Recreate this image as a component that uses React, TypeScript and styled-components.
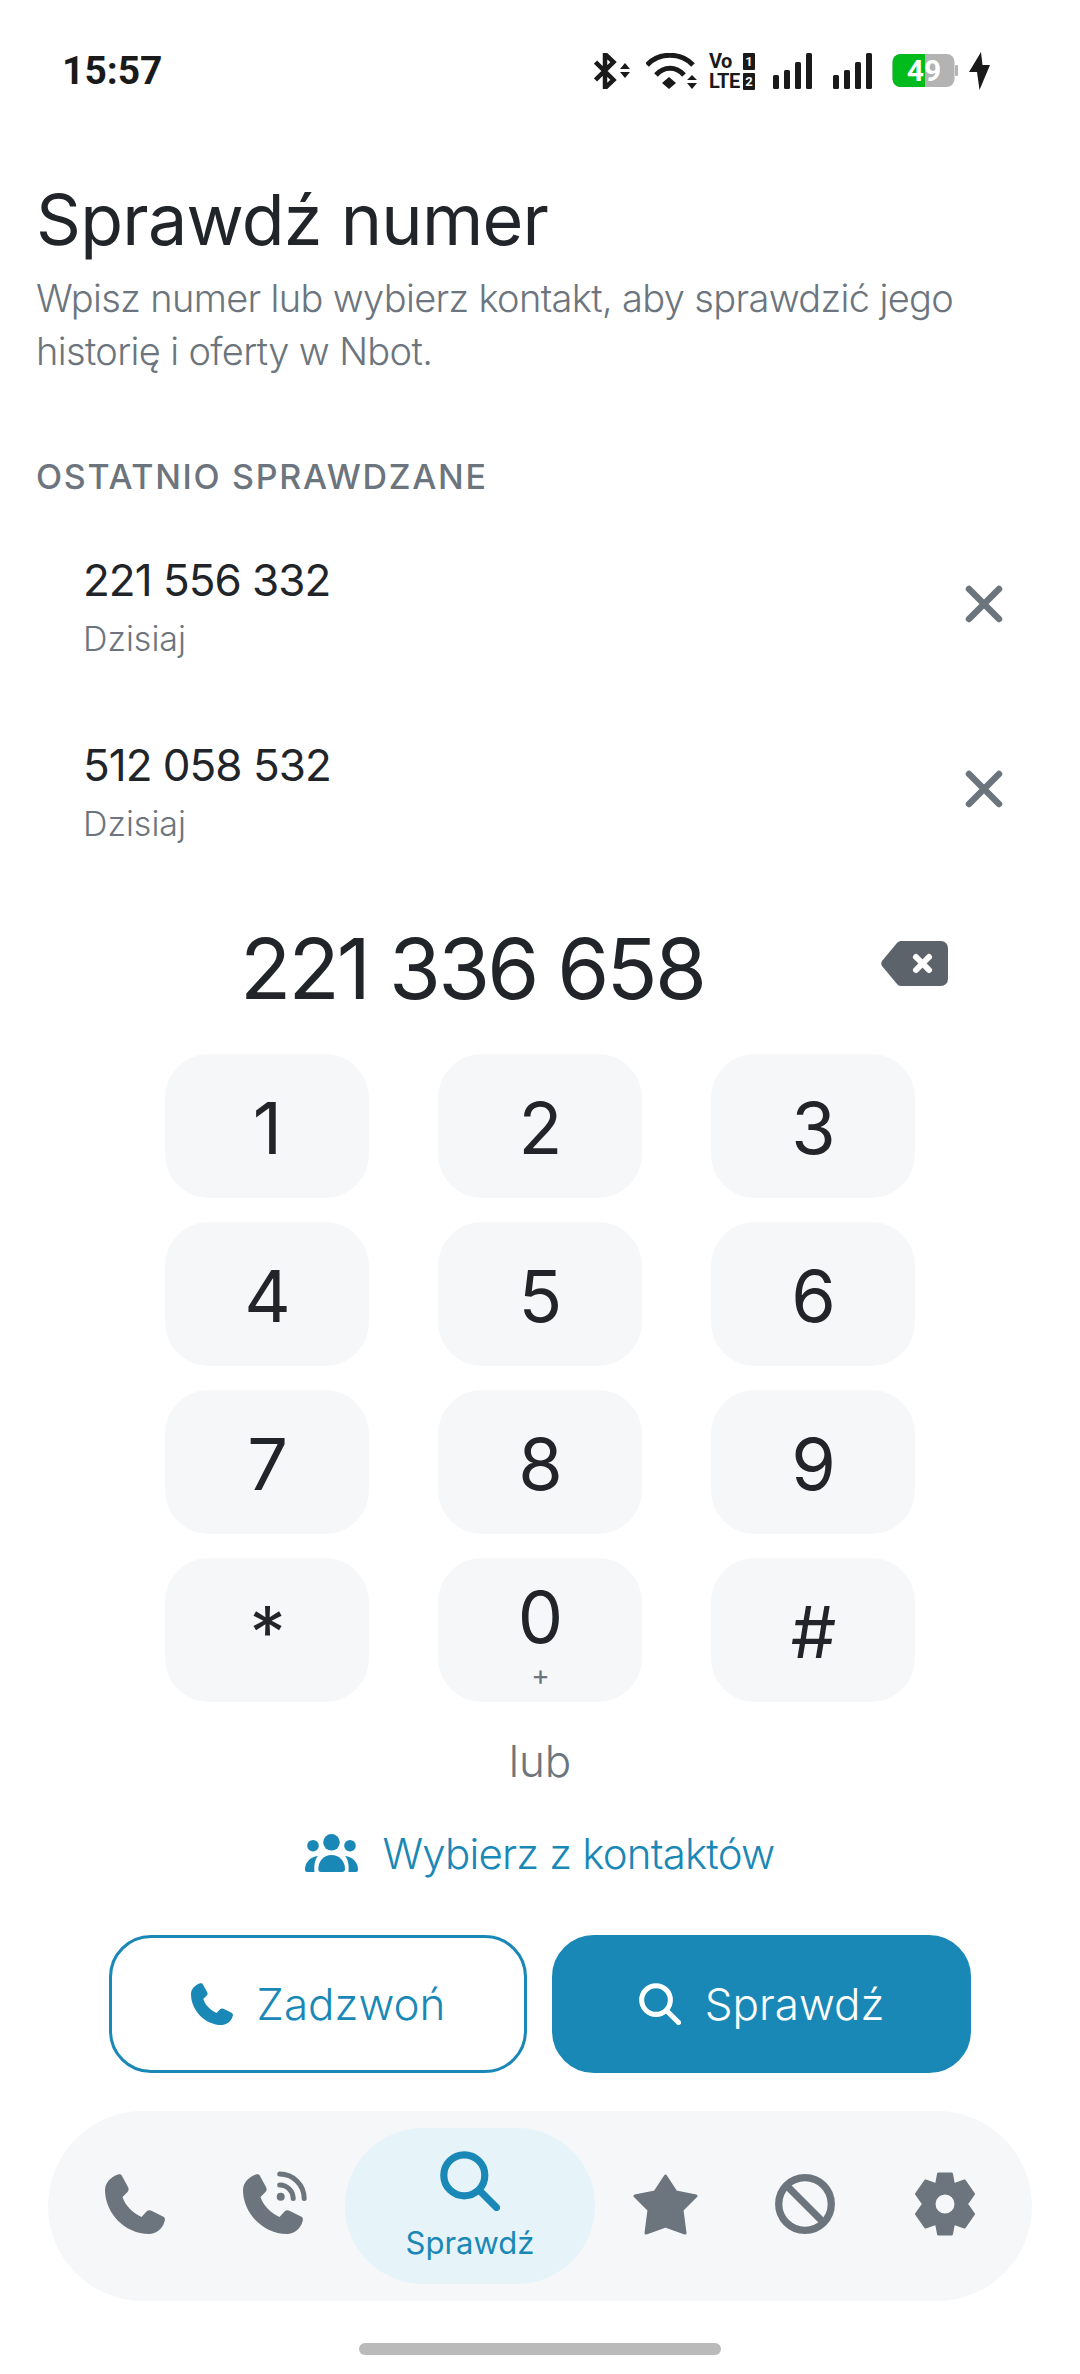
import React from "react";
import styled, { createGlobalStyle } from "styled-components";

const Global = createGlobalStyle`
  html, body { margin: 0; padding: 0; background: #fff; }
  * { box-sizing: border-box; }
`;

const Page = styled.div`
  width: 1080px;
  height: 2374px;
  overflow: hidden;
  background: #fff;
  font-family: Inter, "Liberation Sans", sans-serif;
  color: #212529;
  display: flex;
  flex-direction: column;
`;

const StatusBar = styled.div`
  height: 140px;
  padding: 2px 90px 0 62px;
  display: flex;
  align-items: center;
  justify-content: space-between;
`;
const Clock = styled.span`
  font: 700 39px Roboto, sans-serif;
  color: #1a1a1a;
`;
const StatusIcons = styled.div`
  display: flex;
  align-items: center;
`;
const Gap = styled.span<{ $w: number }>`
  width: ${(p) => p.$w}px;
`;
const VoGrid = styled.div`
  display: grid;
  grid-template-columns: 34px 12px;
  grid-auto-rows: 17px;
  row-gap: 3px;
  width: 46px;
  font: 700 20px/17px Roboto, sans-serif;
  color: #1a1a1a;
`;
const VoText = styled.span`
  white-space: nowrap;
  letter-spacing: -0.5px;
`;
const SimBadge = styled.span`
  background: #1a1a1a;
  color: #fff;
  font-size: 13px;
  line-height: 17px;
  text-align: center;
  border-radius: 1px;
`;

const Header = styled.header`
  padding: 34px 36px 0;
`;
const Title = styled.h1`
  margin: 0;
  font-size: 70px;
  line-height: 92px;
  font-weight: 400;
  letter-spacing: -0.75px;
`;
const Subtitle = styled.p`
  margin: 6px 0 0;
  font-size: 38px;
  line-height: 53px;
  font-weight: 300;
  color: #6c757d;
  letter-spacing: -0.65px;
`;
const SectionLabel = styled.div`
  padding: 77px 36px 0;
  font-size: 34px;
  line-height: 44px;
  font-weight: 500;
  letter-spacing: 1.7px;
  color: #6c757d;
`;

const Recent = styled.div`
  display: flex;
  flex-direction: column;
  padding-top: 30px;
  margin-bottom: 14px;
`;
const RecentRow = styled.div`
  height: 185px;
  padding: 20px 75px 0 83px;
  display: flex;
  justify-content: space-between;
  align-items: flex-start;
`;
const RecentText = styled.div`
  display: flex;
  flex-direction: column;
`;
const RecentNumber = styled.div`
  font-size: 44px;
  line-height: 63px;
  font-weight: 400;
  letter-spacing: -1px;
`;
const RecentDate = styled.div`
  margin-top: 2px;
  font-size: 34px;
  line-height: 50px;
  font-weight: 300;
  color: #6c757d;
`;
const RemoveSvg = styled.svg`
  margin-top: 34px;
  width: 42px;
  height: 42px;
  stroke: #6c757d;
  stroke-width: 6.5;
  stroke-linecap: round;
`;

const Display = styled.div`
  height: 112px;
  padding-left: 240px;
  display: flex;
  align-items: center;
  gap: 177px;
`;
const DialNumber = styled.div`
  font-size: 84px;
  line-height: 100px;
  font-weight: 400;
  letter-spacing: -2.8px;
  white-space: nowrap;
`;
const BackspaceSvg = styled.svg`
  width: 67px;
  height: 45px;
  margin-top: -11px;
`;

const Keypad = styled.div`
  margin: 29px auto 0;
  width: 750px;
  display: grid;
  grid-template-columns: repeat(3, 204px);
  grid-auto-rows: 144px;
  column-gap: 69px;
  row-gap: 24px;
`;
const Key = styled.div`
  background: #f6f7f9;
  border-radius: 44px;
  padding-top: 4px;
  display: flex;
  flex-direction: column;
  align-items: center;
  justify-content: center;
  font-size: 72px;
  line-height: 80px;
  letter-spacing: -1px;
`;
const KeySub = styled.span`
  margin-top: 6px;
  font-size: 28px;
  line-height: 24px;
  color: #6c757d;
`;

const Or = styled.div`
  margin-top: 31px;
  text-align: center;
  font-size: 44px;
  line-height: 56px;
  font-weight: 300;
  color: #6c757d;
`;
const ContactsLink = styled.div`
  margin-top: 36px;
  display: flex;
  align-items: center;
  justify-content: center;
  gap: 24px;
  height: 56px;
  font-size: 42px;
  font-weight: 300;
  letter-spacing: -0.8px;
  color: #1a88b6;
`;
const Actions = styled.div`
  margin: 54px auto 0;
  width: 862px;
  display: grid;
  grid-template-columns: 418px 419px;
  column-gap: 25px;
`;
const ActionButton = styled.div<{ $filled?: boolean }>`
  height: 138px;
  border-radius: 42px;
  display: flex;
  align-items: center;
  justify-content: center;
  gap: 24px;
  font-size: 44px;
  font-weight: 300;
  border: 3px solid #1a88b6;
  background: ${(p) => (p.$filled ? "#1a88b6" : "#fff")};
  color: ${(p) => (p.$filled ? "#fff" : "#1a88b6")};
`;

const Nav = styled.nav`
  margin: 38px auto 0;
  width: 984px;
  height: 190px;
  border-radius: 95px;
  background: #f6f7f9;
  padding: 0 17px;
  display: flex;
  align-items: center;
  color: #6c757d;
`;
const NavItem = styled.div`
  width: 140px;
  padding-bottom: 4px;
  display: flex;
  justify-content: center;
  align-items: center;
`;
const NavActive = styled.div`
  width: 250px;
  height: 156px;
  border-radius: 78px;
  background: #e6f3f9;
  color: #1a88b6;
  display: flex;
  flex-direction: column;
  align-items: center;
  justify-content: center;
  gap: 13px;
  font-size: 31px;
  line-height: 38px;
`;
const HomeBar = styled.div`
  margin: 42px auto 0;
  width: 362px;
  height: 12px;
  border-radius: 6px;
  background: #bababa;
`;

/* status icons */
const Bluetooth = () => (
  <svg width="36" height="36" viewBox="0 0 36 36">
    <path d="M1.5 9 L19.5 27 L11 35 V1 L19.5 9 L1.5 27" fill="none" stroke="#1a1a1a" strokeWidth="4.5" />
    <path d="M26 16 L31 10 L36 16Z M26 19 L31 25 L36 19Z" fill="#1a1a1a" />
  </svg>
);
const Wifi = () => (
  <svg width="51" height="36" viewBox="0 0 51 36">
    <g fill="none" stroke="#1a1a1a" strokeWidth="5">
      <path d="M1 12 C13 -1 35 -1 47 12" />
      <path d="M10 22 C18 13 30 13 38 22" />
    </g>
    <path d="M16 30 L23 24 L30 30 L23 36Z" fill="#1a1a1a" />
    <path d="M41 27 L46 22 L51 27Z M41 30 L46 36 L51 30Z" fill="#1a1a1a" />
  </svg>
);
const VoLte = () => (
  <VoGrid>
    <VoText>Vo</VoText>
    <SimBadge>1</SimBadge>
    <VoText>LTE</VoText>
    <SimBadge>2</SimBadge>
  </VoGrid>
);
const Signal = () => (
  <svg width="39" height="36" viewBox="0 0 39 36">
    <g fill="#1a1a1a">
      <rect x="0" y="22" width="6" height="14" rx="1.5" />
      <rect x="11" y="17" width="6" height="19" rx="1.5" />
      <rect x="22" y="9" width="6" height="27" rx="1.5" />
      <rect x="33" y="0" width="6" height="36" rx="1.5" />
    </g>
  </svg>
);
const Battery = () => (
  <svg width="66" height="36" viewBox="0 0 66 36">
    <rect x="0.5" y="1" width="62" height="33" rx="8" fill="#b3b3b3" />
    <path d="M8 1 H33 V34 H8 A8 8 0 0 1 0.5 26 V9 A8 8 0 0 1 8 1Z" fill="#00bb1b" />
    <rect x="63" y="12" width="3" height="11" rx="1" fill="#b3b3b3" />
    <text x="32" y="28" textAnchor="middle" fontFamily="Roboto, sans-serif" fontWeight="700" fontSize="30" fill="#fff">49</text>
  </svg>
);
const Bolt = () => (
  <svg width="21" height="38" viewBox="0 0 21 38">
    <path d="M12 0 L0 20 H8 L10.5 38 L21 13 H13.5Z" fill="#1a1a1a" />
  </svg>
);

/* app icons */
const PHONE =
  "M13 0.5 C15 0 16.5 0.5 17 2 L23 13 C24 15 23.8 16.5 22.5 18 L17.5 23 C20 31 27.5 39 36.5 43 L41.5 37.5 C43 36 45 36 47 37 L58 42.5 C60 43.5 60.3 45.5 59.5 47.5 C57.5 55 51 60 44 60 C20 60 0 39 0 16 C0 9 5.5 3 13 0.5Z";

const PhoneIcon: React.FC<{ size?: number }> = ({ size = 60 }) => (
  <svg width={size} height={size} viewBox="0 0 60 60" fill="currentColor">
    <path d={PHONE} />
  </svg>
);
const CallScreenIcon = () => (
  <svg width="64" height="66" viewBox="0 -3 64 66" fill="currentColor">
    <path d={PHONE} />
    <circle cx="37.7" cy="22.7" r="4" />
    <g fill="none" stroke="currentColor" strokeWidth="5" strokeLinecap="round">
      <path d="M36.7 11 A13.5 13.5 0 0 1 50.2 24.5" />
      <path d="M36.7 0 A24.5 24.5 0 0 1 61.2 24.5" />
    </g>
  </svg>
);
const SearchIcon: React.FC<{ size: number }> = ({ size }) => (
  <svg width={size} height={size} viewBox="0 0 60 60" fill="none" stroke="currentColor" strokeWidth="7.2" strokeLinecap="round">
    <circle cx="24.3" cy="24.3" r="20.5" />
    <line x1="41" y1="41" x2="56.5" y2="56.5" />
  </svg>
);
const StarIcon = () => (
  <svg width="65" height="61" viewBox="0 0 65 61" fill="currentColor" stroke="currentColor" strokeWidth="3" strokeLinejoin="round">
    <path d="M32.5 2 L43 18 L63 22 L49 36 L52 59 L32.5 52 L13 59 L16 36 L2 22 L22 18Z" />
  </svg>
);
const BlockIcon = () => (
  <svg width="60" height="60" viewBox="0 0 60 60" fill="none" stroke="currentColor" strokeWidth="7.3">
    <circle cx="30" cy="30" r="26.3" />
    <line x1="13" y1="13" x2="47" y2="47" />
  </svg>
);
const GearIcon = () => (
  <svg width="60" height="64" viewBox="0 0 60 64" fill="currentColor" fillRule="evenodd" stroke="currentColor" strokeWidth="3" strokeLinejoin="round">
    <path d="M23.5 2 H36.5 L38.5 13 L49.5 9 L58.5 22 L51.5 32 L58.5 42 L49.5 55 L38.5 51 L36.5 62 H23.5 L21.5 51 L10.5 55 L1.5 42 L8.5 32 L1.5 22 L10.5 9 L21.5 13Z M30 21 A11 11 0 1 0 30 43 A11 11 0 1 0 30 21Z" />
  </svg>
);
const ContactsIcon = () => (
  <svg width="53" height="38" viewBox="0 0 53 38" fill="currentColor">
    <circle cx="26.5" cy="8.3" r="8.3" />
    <circle cx="8" cy="11.7" r="5.8" />
    <circle cx="45" cy="11.7" r="5.8" />
    <path d="M16 38 C14 38 13.3 37 13.3 35 C13.3 27 19 21 26.5 21 C34 21 40 27 40 35 C40 37 39 38 37 38Z" />
    <path d="M2 38 C0.5 38 0 37 0 35.5 C0 28.5 5 23 13 22 C9.5 26 9 32 9.5 38Z" />
    <path d="M51 38 C52.5 38 53 37 53 35.5 C53 28.5 48 23 40 22 C43.5 26 44 32 43.5 38Z" />
  </svg>
);
const RemoveIcon = () => (
  <RemoveSvg viewBox="0 0 42 42">
    <line x1="6" y1="6" x2="36" y2="36" />
    <line x1="36" y1="6" x2="6" y2="36" />
  </RemoveSvg>
);
const BackspaceIcon = () => (
  <BackspaceSvg viewBox="0 0 67 45">
    <path d="M20 0 H60 A7 7 0 0 1 67 7 V38 A7 7 0 0 1 60 45 H20 C18 45 17 44 16 43 L1 25 C0 23.5 0 21.5 1 20 L16 2 C17 1 18 0 20 0Z" fill="#5c636a" />
    <g stroke="#fff" strokeWidth="6" strokeLinecap="round">
      <line x1="35" y1="16" x2="48" y2="29" />
      <line x1="48" y1="16" x2="35" y2="29" />
    </g>
  </BackspaceSvg>
);

const Status: React.FC = () => (
  <StatusBar>
    <Clock>15:57</Clock>
    <StatusIcons>
      <Bluetooth />
      <Gap $w={16} />
      <Wifi />
      <Gap $w={12} />
      <VoLte />
      <Gap $w={18} />
      <Signal />
      <Gap $w={21} />
      <Signal />
      <Gap $w={20} />
      <Battery />
      <Gap $w={11} />
      <Bolt />
    </StatusIcons>
  </StatusBar>
);

const recents = ["221 556 332", "512 058 532"];
const keys = ["1", "2", "3", "4", "5", "6", "7", "8", "9", "*", "0", "#"];

export default function App() {
  return (
    <Page>
      <Global />
      <Status />
      <Header>
        <Title>Sprawdź numer</Title>
        <Subtitle>Wpisz numer lub wybierz kontakt, aby sprawdzić jego historię i oferty w Nbot.</Subtitle>
      </Header>
      <SectionLabel>OSTATNIO SPRAWDZANE</SectionLabel>
      <Recent>
        {recents.map((r) => (
          <RecentRow key={r}>
            <RecentText>
              <RecentNumber>{r}</RecentNumber>
              <RecentDate>Dzisiaj</RecentDate>
            </RecentText>
            <RemoveIcon />
          </RecentRow>
        ))}
      </Recent>
      <Display>
        <DialNumber>221 336 658</DialNumber>
        <BackspaceIcon />
      </Display>
      <Keypad>
        {keys.map((k) => (
          <Key key={k}>
            {k}
            {k === "0" && <KeySub>+</KeySub>}
          </Key>
        ))}
      </Keypad>
      <Or>lub</Or>
      <ContactsLink>
        <ContactsIcon />
        Wybierz z kontaktów
      </ContactsLink>
      <Actions>
        <ActionButton>
          <PhoneIcon size={42} />
          Zadzwoń
        </ActionButton>
        <ActionButton $filled>
          <SearchIcon size={42} />
          Sprawdź
        </ActionButton>
      </Actions>
      <Nav>
        <NavItem><PhoneIcon /></NavItem>
        <NavItem><CallScreenIcon /></NavItem>
        <NavActive>
          <SearchIcon size={60} />
          Sprawdź
        </NavActive>
        <NavItem><StarIcon /></NavItem>
        <NavItem><BlockIcon /></NavItem>
        <NavItem><GearIcon /></NavItem>
      </Nav>
      <HomeBar />
    </Page>
  );
}
